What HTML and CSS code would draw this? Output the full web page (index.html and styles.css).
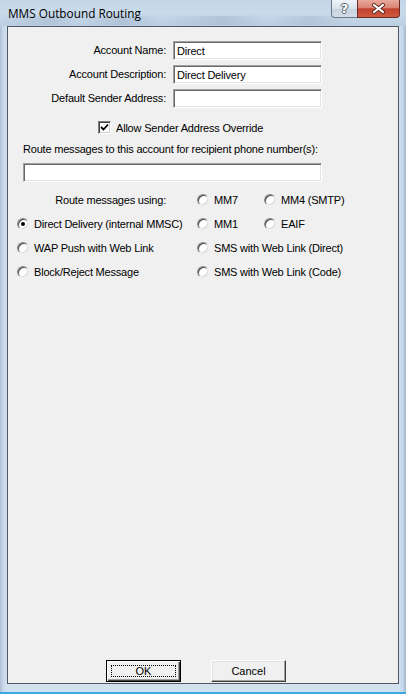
FILE: index.html
```html
<!DOCTYPE html>
<html lang="en">
<head>
    <meta charset="utf-8">
    <title>MMS Outbound Routing</title>
    <link rel="stylesheet" href="styles.css">
</head>
<body>
    <div class="window">
        <div class="titlebar">
            <span class="title">MMS Outbound Routing</span>
            <div class="caption-btns">
                <div class="cap-btn cap-help">?</div>
                <div class="cap-btn cap-close">
                    <svg width="15" height="11" viewBox="0 0 15 11">
                        <path d="M3 2 L12 9 M12 2 L3 9" stroke="#5a2a22" stroke-width="4" stroke-linecap="round"/>
                        <path d="M3 2 L12 9 M12 2 L3 9" stroke="#fff" stroke-width="2.2" stroke-linecap="round"/>
                    </svg>
                </div>
            </div>
        </div>

        <div class="client">
            <div class="fields">
                <label class="field-label" for="acct-name">Account Name:</label>
                <input class="field" id="acct-name" type="text" value="Direct">
                <label class="field-label" for="acct-desc">Account Description:</label>
                <input class="field" id="acct-desc" type="text" value="Direct Delivery">
                <label class="field-label" for="sender">Default Sender Address:</label>
                <input class="field" id="sender" type="text" value="">
            </div>

            <div class="check-row">
                <span class="checkbox">
                    <svg width="9" height="9" viewBox="0 0 9 9">
                        <path d="M1 4 L3.5 6.5 L8 1.5" stroke="#000" stroke-width="1.8" fill="none"/>
                    </svg>
                </span>
                <span>Allow Sender Address Override</span>
            </div>

            <div class="phone-label">Route messages to this account for recipient phone number(s):</div>
            <input class="field field-wide" type="text" value="">

            <div class="routes">
                <div class="route-title">Route messages using:</div>
                <div class="opt"><span class="radio"></span>MM7</div>
                <div class="opt"><span class="radio"></span>MM4 (SMTP)</div>

                <div class="opt"><span class="radio checked"></span>Direct Delivery (internal MMSC)</div>
                <div class="opt"><span class="radio"></span>MM1</div>
                <div class="opt"><span class="radio"></span>EAIF</div>

                <div class="opt"><span class="radio"></span>WAP Push with Web Link</div>
                <div class="opt span2"><span class="radio"></span>SMS with Web Link (Direct)</div>

                <div class="opt"><span class="radio"></span>Block/Reject Message</div>
                <div class="opt span2"><span class="radio"></span>SMS with Web Link (Code)</div>
            </div>

            <div class="buttons">
                <button class="btn btn-default">OK</button>
                <button class="btn">Cancel</button>
            </div>
        </div>
    </div>
</body>
</html>
```

FILE: styles.css
```css
* {
    margin: 0;
    padding: 0;
    box-sizing: border-box;
}

body {
    width: 406px;
    height: 694px;
    overflow: hidden;
    font-family: 'Liberation Sans', Arial, sans-serif;
    font-size: 11px;
    letter-spacing: -0.2px;
    color: #000;
}

.window {
    width: 406px;
    height: 694px;
    display: flex;
    flex-direction: column;
    padding: 0 7px 8px 7px;
    background: linear-gradient(to right, #aebfd2 0px, #c8d8e9 3px, #d3e1ef 7px, #d3e1ef 399px, #c5d6e8 403px, #9fb3c8 406px);
    border-bottom: 2px solid #3aa9e2;
}

.titlebar {
    height: 26px;
    display: flex;
    align-items: flex-start;
    justify-content: space-between;
    margin: 0 -7px;
    padding: 0 6px 0 8px;
    background:
        linear-gradient(to right, rgba(120, 140, 160, 0) 0%, rgba(120, 140, 160, 0.18) 12%, rgba(120, 140, 160, 0) 20%, rgba(120, 140, 160, 0.2) 30%, rgba(120, 140, 160, 0) 40%, rgba(120, 140, 160, 0.22) 55%, rgba(120, 140, 160, 0) 66%, rgba(120, 140, 160, 0.18) 76%, rgba(120, 140, 160, 0) 86%) 0 16px / 100% 9px no-repeat,
        linear-gradient(to bottom, #c3d5e7 0%, #c9daeb 45%, #bccfe2 100%);
}

.title {
    font-family: 'Open Sans', 'Noto Sans', sans-serif;
    font-size: 11.8px;
    letter-spacing: 0;
    line-height: 16px;
    padding-top: 5px;
    color: #000;
}

.caption-btns {
    display: flex;
}

.cap-btn {
    height: 18px;
    border: 1px solid #6b7888;
    border-top: none;
    display: flex;
    align-items: center;
    justify-content: center;
}

.cap-help {
    width: 26px;
    border-radius: 0 0 0 4px;
    border-right: none;
    background: linear-gradient(to bottom, #eef3f8 0%, #d9e2ec 50%, #c6d2df 52%, #d3dde8 100%);
    font-family: 'DejaVu Sans', sans-serif;
    font-weight: bold;
    font-size: 13px;
    color: #fff;
    text-shadow: 1px 0 #59636e, -1px 0 #59636e, 0 1px #59636e, 0 -1px #59636e;
}

.cap-close {
    width: 43px;
    border-radius: 0 0 4px 0;
    border-color: #6a2b24;
    background: linear-gradient(to bottom, #e9a99c 0%, #d98474 45%, #c2412f 52%, #cf5a3f 100%);
}

.client {
    flex: 1;
    display: flex;
    flex-direction: column;
    background: #f0f0f0;
    border: 1px solid #4d5864;
}

.fields {
    display: grid;
    grid-template-columns: 158px 149px;
    grid-auto-rows: 19px;
    column-gap: 7px;
    row-gap: 5px;
    margin-top: 14px;
}

.field-label {
    justify-self: end;
    align-self: center;
    line-height: 13px;
}

.field {
    height: 19px;
    background: #fff;
    border: 1px solid;
    border-color: #a0a0a0 #ffffff #ffffff #a0a0a0;
    box-shadow: inset 1px 1px 0 #696969, inset -1px -1px 0 #e3e3e3;
    padding: 0 2px 0 3px;
    font-family: 'Liberation Sans', Arial, sans-serif;
    font-size: 11px;
    letter-spacing: -0.2px;
    color: #000;
    outline: none;
}

.check-row {
    display: flex;
    align-items: center;
    gap: 5px;
    margin-top: 13px;
    padding-left: 90px;
    height: 13px;
}

.checkbox {
    width: 13px;
    height: 13px;
    background: #fff;
    border: 1px solid;
    border-color: #808080 #ffffff #ffffff #808080;
    box-shadow: inset 1px 1px 0 #404040, inset -1px -1px 0 #d4d0c8;
    display: flex;
    align-items: center;
    justify-content: center;
}

.phone-label {
    margin-top: 9px;
    padding-left: 15px;
    line-height: 13px;
}

.field-wide {
    width: 299px;
    margin-top: 7px;
    margin-left: 15px;
}

.routes {
    display: grid;
    grid-template-columns: 180px 67px auto;
    grid-auto-rows: 16px;
    row-gap: 8px;
    margin-top: 10px;
    padding-left: 9px;
}

.route-title {
    text-align: right;
    padding-right: 31px;
    line-height: 16px;
}

.opt {
    display: flex;
    align-items: center;
    gap: 5px;
    white-space: nowrap;
}

.span2 {
    grid-column: span 2;
}

.radio {
    width: 12px;
    height: 12px;
    flex: none;
    border-radius: 50%;
    background: #fff;
    border: 1px solid;
    border-color: #8a8a8a #ececec #ececec #8a8a8a;
    box-shadow: inset 1px 1px 0 #4a4a4a, inset -1px -1px 0 #d8d8d8;
    display: flex;
    align-items: center;
    justify-content: center;
}

.radio.checked::after {
    content: "";
    width: 4px;
    height: 4px;
    border-radius: 50%;
    background: #000;
}

.buttons {
    margin-top: auto;
    display: flex;
    gap: 30px;
    padding-left: 98px;
    padding-bottom: 1px;
}

.btn {
    width: 75px;
    height: 22px;
    background: #f0f0f0;
    border: 1px solid;
    border-color: #ffffff #404040 #404040 #ffffff;
    box-shadow: inset -1px -1px 0 #a0a0a0, inset 1px 1px 0 #e3e3e3;
    font-family: 'Liberation Sans', Arial, sans-serif;
    font-size: 11px;
    color: #000;
    position: relative;
}

.btn-default {
    border: 1px solid #000;
    box-shadow: inset 1px 1px 0 #fff, inset -1px -1px 0 #404040, inset -2px -2px 0 #a0a0a0;
}

.btn-default::after {
    content: "";
    position: absolute;
    left: 4px;
    top: 4px;
    right: 4px;
    bottom: 4px;
    border: 1px dotted #000;
}
```
